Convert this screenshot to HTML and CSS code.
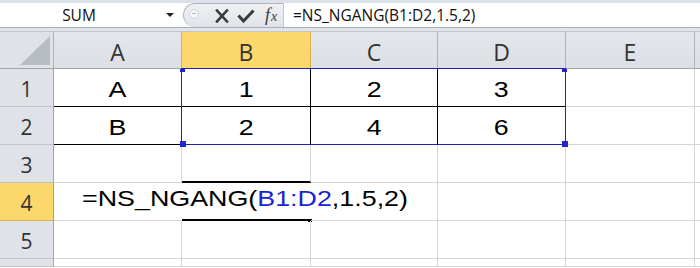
FILE: index.html
```html
<!DOCTYPE html>
<html>
<head>
<meta charset="utf-8">
<link rel="stylesheet" href="styles.css">
</head>
<body>
<div class="app">
  <div class="topstrip"></div>
  <div class="fbar">
    <div class="namebox">
      <span class="name">SUM</span>
      <span class="dd"></span>
    </div>
    <div class="pill">
      <span class="grip"></span>
      <svg class="ico ico-x" width="14" height="14" viewBox="0 0 14 14"><path d="M2 1.5 L12 12.5 M12 1.5 L2 12.5" stroke="#3a3a3a" stroke-width="2.6" stroke-linecap="square" fill="none"/></svg>
      <svg class="ico ico-check" width="18" height="14" viewBox="0 0 18 14"><path d="M1.5 6.5 L6.5 12 L16.5 1.5" stroke="#3a3a3a" stroke-width="3" fill="none"/></svg>
      <span class="fx"><i>f</i><i class="fx-x">x</i></span>
    </div>
    <div class="formula">=NS_NGANG(B1:D2,1.5,2)</div>
  </div>
  <div class="gapbar"></div>
  <div class="grid">
    <div class="corner"><span class="tri"></span></div>
    <div class="ch">A</div>
    <div class="ch sel">B</div>
    <div class="ch">C</div>
    <div class="ch">D</div>
    <div class="ch">E</div>
    <div class="ch last"></div>

    <div class="rh">1</div>
    <div class="c blk-b"><span class="t">A</span></div>
    <div class="c blk-b blk-r"><span class="t">1</span></div>
    <div class="c blk-b blk-r"><span class="t">2</span></div>
    <div class="c blk-b"><span class="t">3</span></div>
    <div class="c"></div>
    <div class="c last"></div>

    <div class="rh">2</div>
    <div class="c blk-b"><span class="t">B</span></div>
    <div class="c blk-b blk-r"><span class="t">2</span></div>
    <div class="c blk-b blk-r"><span class="t">4</span></div>
    <div class="c blk-b"><span class="t">6</span></div>
    <div class="c"></div>
    <div class="c last"></div>

    <div class="rh">3</div>
    <div class="c"></div>
    <div class="c thick-b"></div>
    <div class="c"></div>
    <div class="c"></div>
    <div class="c"></div>
    <div class="c last"></div>

    <div class="rh sel">4</div>
    <div class="c no-r edit"><span class="ft">=NS_NGANG(<span class="ref">B1:D2</span>,1.5,2)</span></div>
    <div class="c no-r thick-b b4"><span class="fill-h"></span></div>
    <div class="c"></div>
    <div class="c"></div>
    <div class="c"></div>
    <div class="c last"></div>

    <div class="rh">5</div>
    <div class="c"></div>
    <div class="c"></div>
    <div class="c"></div>
    <div class="c"></div>
    <div class="c"></div>
    <div class="c last"></div>

    <div class="rh"></div>
    <div class="c"></div>
    <div class="c"></div>
    <div class="c"></div>
    <div class="c"></div>
    <div class="c"></div>
    <div class="c last"></div>

    <div class="selbox">
      <span class="h h-tl"></span>
      <span class="h h-tr"></span>
      <span class="h h-bl"></span>
      <span class="h h-br"></span>
    </div>
  </div>
</div>
</body>
</html>
```

FILE: styles.css
```css
* { box-sizing: border-box; }
html, body { margin: 0; padding: 0; background: #fff; }
body { width: 700px; height: 268px; overflow: hidden; }

.app { width: 700px; height: 268px; display: flex; flex-direction: column; }

.topstrip { height: 3px; background: #dde1e9; }

.fbar {
  height: 25px;
  display: flex;
  background: #fff;
  border-bottom: 1px solid #a9afb7;
}
.namebox {
  width: 183px;
  display: flex;
  align-items: center;
  position: relative;
}
.name {
  width: 158px;
  text-align: center;
  font-family: "Open Sans", sans-serif;
  font-size: 15.5px;
  color: #111;
  line-height: 24px;
}
.dd {
  width: 0; height: 0;
  border-left: 4px solid transparent;
  border-right: 4px solid transparent;
  border-top: 4px solid #222;
  margin-left: 8px;
}
.pill {
  width: 101px;
  display: flex;
  align-items: center;
  background: linear-gradient(#eef0f3, #e0e4e9);
  border: 1px solid #aeb4bc;
  border-right-color: #c4c8cd;
  border-radius: 12px 0 0 12px;
  border-bottom: none;
  padding-left: 5px;
}
.grip {
  width: 10px; height: 10px;
  border-radius: 50%;
  background: #f4f5f7;
  border: 1px solid #cfd3d8;
  position: relative;
  margin-top: -3px;
}
.grip::after {
  content: "";
  position: absolute;
  left: 2px; top: 3px;
  width: 4px; height: 1px;
  background: #b5b9bf;
}
.ico { display: block; }
.ico-x { margin-left: 16px; }
.ico-check { margin-left: 8px; }
.fx {
  margin-left: 10px;
  font-family: "Liberation Serif", serif;
  font-size: 18px;
  color: #3a3a3a;
  line-height: 1;
  margin-top: -2px;
}
.fx i { font-style: italic; }
.fx-x { font-size: 14px; margin-left: 1px; }

.formula {
  flex: 1;
  padding-left: 9px;
  font-family: "Open Sans", sans-serif;
  font-size: 15.5px;
  color: #111;
  line-height: 24px;
  white-space: nowrap;
}

.gapbar { height: 3px; background: #e1e4e9; }

.grid {
  position: relative;
  display: grid;
  grid-template-columns: 54px 128px 129px 127px 128px 129px 5px;
  grid-template-rows: 38px 38px 38px 38px 38px 38px 8px;
}

.corner {
  background: #dfe3e8;
  border-right: 1px solid #aeb3b9;
  border-bottom: 1px solid #9ea5ad;
  border-top: 1px solid #c2c7cd;
  display: flex;
  justify-content: flex-end;
  align-items: flex-end;
  padding: 0 3px 3px 0;
}
.tri {
  width: 30px; height: 29px;
  background: #b8bdc3;
  clip-path: polygon(100% 0, 100% 100%, 0 100%);
}

.ch {
  background: linear-gradient(#e3e6ea, #dcdfe4);
  border-right: 1px solid #aeb3b9;
  border-bottom: 1px solid #9ea5ad;
  border-top: 1px solid #c2c7cd;
  display: flex;
  justify-content: center;
  align-items: center;
  padding-top: 3px;
  font-family: "Open Sans", sans-serif;
  font-size: 23px;
  color: #333;
}
.ch.sel {
  background: #fcd86c;
  border-right-color: #d9b04c;
  border-bottom-color: #c99c36;
}
.ch.last { border-right: none; }

.rh {
  background: #dfe3e8;
  border-right: 1px solid #9ea5ad;
  border-bottom: 1px solid #bfc4ca;
  display: flex;
  justify-content: center;
  align-items: center;
  padding-top: 3px;
  font-family: "Open Sans", sans-serif;
  font-size: 21px;
  color: #333;
}
.rh.sel {
  background: #fcd86c;
  border-bottom-color: #d9b04c;
  border-right-color: #c99c36;
}

.c {
  border-right: 1px solid #d6d6d6;
  border-bottom: 1px solid #d6d6d6;
  display: flex;
  justify-content: center;
  align-items: center;
  padding-top: 4px;
  font-family: "Liberation Sans", Arial, sans-serif;
  font-size: 22px;
  color: #000;
  position: relative;
}
.c.last { border-right: none; }
.t { display: inline-block; transform: scaleX(1.22); }

.blk-b { border-bottom-color: #000; }
.blk-r { border-right-color: #000; }
.thick-b { border-bottom: 2px solid #000; }
.no-r { border-right-color: transparent; }

.edit {
  justify-content: flex-start;
  align-items: flex-start;
  padding: 3px 0 0 28px;
  overflow: visible;
  z-index: 2;
}
.ft {
  display: inline-block;
  white-space: nowrap;
  transform: scaleX(1.22);
  transform-origin: left center;
  line-height: 25px;
}
.ref { color: #1c22d8; }

.fill-h {
  position: absolute;
  right: -2px;
  bottom: -3px;
  width: 4px;
  height: 3px;
  background: #000;
}

.selbox {
  position: absolute;
  left: 181px;
  top: 37px;
  width: 385px;
  height: 77px;
  border: 1px solid #1f22b8;
  pointer-events: none;
  z-index: 3;
}
.h { position: absolute; background: #1f26d6; }
.h-tl { left: -2px; top: 0; width: 5px; height: 3px; }
.h-tr { right: -2px; top: 0; width: 5px; height: 3px; }
.h-bl { left: -2px; bottom: -3px; width: 6px; height: 6px; }
.h-br { right: -3px; bottom: -3px; width: 6px; height: 6px; }
```
